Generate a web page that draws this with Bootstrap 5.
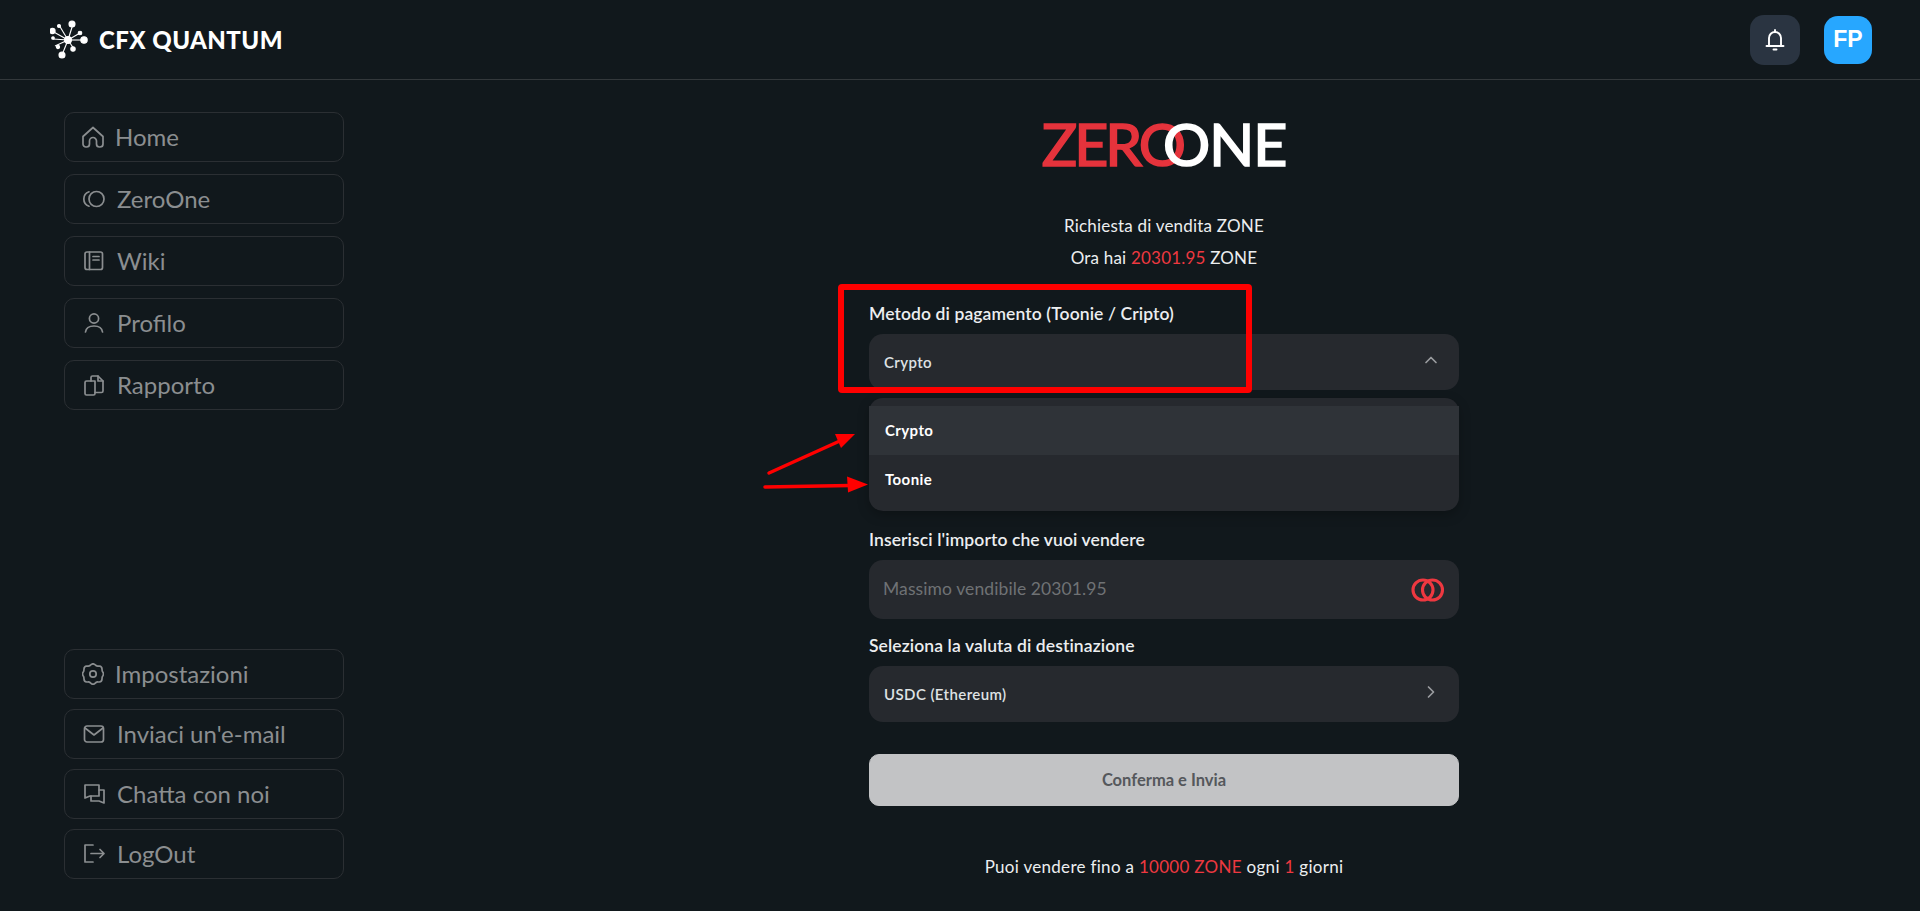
<!DOCTYPE html>
<html lang="en">
<head>
  <meta charset="UTF-8" />
  <meta name="viewport" content="width=device-width, initial-scale=1" />
  <title>CFX Quantum</title>
  <link href="https://cdn.jsdelivr.net/npm/bootstrap@5.3.0/dist/css/bootstrap.min.css" rel="stylesheet" />
  <style>
    body { background: #11181c; color: #eceef0; font-family: "Lato", "Noto Sans", sans-serif; height: 911px; overflow: hidden; }
    .top-bar { height: 80px; border-bottom: 1px solid #33383b; padding: 0 48px 0 50px; }
    .brand-name { font-family: "Lato", sans-serif; font-weight: 900; font-size: 24px; letter-spacing: .45px; color: #fff; margin-left: 9px; }
    .bell-btn { width: 50px; height: 50px; border-radius: 14px; background: #2a3441; border: 0; }
    .avatar-btn { width: 48px; height: 48px; border-radius: 14px; background: #27a7ff; color: #fff; font: 700 23px "Liberation Sans", sans-serif; border: 0; margin-left: 24px; }
    .page-body { height: 831px; }
    .side-col { width: 408px; padding: 32px 64px; flex-shrink: 0; }
    .side-top { gap: 12px; }
    .side-bottom { gap: 10px; }
    .side-link { height: 50px; padding-left: 17px; gap: 11px; border: 1px solid #2b2f33; border-radius: 10px; color: #8b8e90; font-size: 24px; text-decoration: none; }
    .side-link svg { fill: none; stroke: currentColor; stroke-width: 1.7; stroke-linecap: round; stroke-linejoin: round; flex-shrink: 0; }
    .form-col { width: 590px; padding-top: 42px; }
    .logo-row { height: 46px; margin-bottom: 42px; font-size: 59px; line-height: 44px; -webkit-text-stroke: 1.7px currentColor; }
    .logo-zero { color: #e5333c; letter-spacing: -3px; }
    .logo-one { color: #fff; margin-left: -20px; letter-spacing: -1px; }
    .intro-line { font-size: 17px; line-height: 32px; text-align: center; letter-spacing: .2px; color: #eceef0; }
    .accent { color: #ee3840; }
    .field-label { display: block; font-size: 17.5px; font-weight: 600; letter-spacing: .1px; line-height: 20px; margin: 0 0 10px; color: #eceef0; }
    .select-box { height: 56px; background: #26292e; border-radius: 14px; padding: 0 21px 0 15px; font-size: 15px; font-weight: 600; letter-spacing: .4px; color: #dfe2e4; }
    .select-box svg { fill: none; stroke: #9a9c9f; stroke-width: 1.7; stroke-linecap: round; stroke-linejoin: round; }
    .option-list.dropdown-menu { --bs-dropdown-bg: #26292e; --bs-dropdown-border-width: 0; --bs-dropdown-border-radius: 14px; --bs-dropdown-padding-y: 8px; --bs-dropdown-item-padding-x: 16px; --bs-dropdown-item-padding-y: 0; --bs-dropdown-spacer: 0; --bs-dropdown-link-color: #fff; --bs-dropdown-link-active-color: #fff; width: 100%; height: 113px; margin: 8px 0 19px; box-shadow: 0 4px 12px rgba(0,0,0,.25); }
    .option-list .dropdown-item { height: 49px; line-height: 49px; font-size: 15px; font-weight: 700; letter-spacing: .4px; }
    .option-list .dropdown-item.is-current { background: #2f3338; }
    .amount-box { height: 59px; background: #26292e; border-radius: 14px; padding: 0 14px; margin-bottom: 17px; }
    .amount-box .form-control { background: transparent; border: 0; padding: 0; box-shadow: none; color: #fff; font-size: 17.5px; letter-spacing: .1px; }
    .amount-box .form-control::placeholder { color: #6f7275; opacity: 1; }
    .send-btn { --bs-btn-disabled-bg: #c2c3c5; --bs-btn-disabled-color: #55585c; --bs-btn-disabled-border-color: #c2c3c5; --bs-btn-disabled-opacity: 1; height: 52px; border-radius: 10px; font-size: 16.5px; font-weight: 700; margin-top: 32px; }
    .limit-note { font-size: 17px; letter-spacing: .3px; text-align: center; margin-top: 48px; color: #eceef0; }
    .annot { position: absolute; top: 0; left: 0; pointer-events: none; }
  </style>
</head>
<body>

<!-- Header -->
<header class="top-bar d-flex align-items-center">
  <svg width="40" height="40" viewBox="0 0 40 40" class="flex-shrink-0">
    <g stroke="#fff" stroke-width="1.1" fill="#fff">
      <line x1="18" y1="20" x2="23" y2="4"/><line x1="18" y1="20" x2="9" y2="5"/><line x1="18" y1="20" x2="2" y2="11"/>
      <line x1="18" y1="20" x2="5" y2="26"/><line x1="18" y1="20" x2="12" y2="35"/><line x1="18" y1="20" x2="24" y2="29"/>
      <line x1="18" y1="20" x2="35" y2="20"/><line x1="18" y1="20" x2="30" y2="13"/><line x1="18" y1="20" x2="3" y2="19"/>
      <circle cx="18" cy="20" r="3.4"/><circle cx="22" cy="4" r="3"/><circle cx="9" cy="6" r="1.5"/>
      <circle cx="2.5" cy="11" r="2.6"/><circle cx="3" cy="18" r="1.3"/><circle cx="8" cy="27" r="1.6"/>
      <circle cx="12" cy="35" r="3"/><circle cx="23" cy="29" r="2.2"/><circle cx="34" cy="20" r="3.2"/><circle cx="30" cy="13" r="1.8"/>
    </g>
  </svg>
  <span class="brand-name">CFX QUANTUM</span>
  <div class="ms-auto d-flex align-items-center">
    <button class="bell-btn d-flex align-items-center justify-content-center" type="button" aria-label="Notifiche">
      <svg width="20" height="24" viewBox="0 0 20 24" fill="none" stroke="#fff" stroke-width="1.9" stroke-linecap="round" stroke-linejoin="round">
        <path d="M4 17.500V10a6 6 0 0 1 12 0v7.500"/><path d="M1.500 18h17"/><path d="M8.500 21.500h3"/><path d="M10 2v2"/>
      </svg>
    </button>
    <button class="avatar-btn" type="button">FP</button>
  </div>
</header>

<div class="page-body d-flex">

  <!-- Sidebar -->
  <aside class="side-col d-flex flex-column justify-content-between">
    <nav class="side-top d-flex flex-column">
      <a href="#" class="side-link d-flex align-items-center">
        <svg width="22" height="22" viewBox="0 0 22 22"><path d="M1 10.500 11 1.500l10 9v7.500a3 3 0 0 1-3 3h-.5a3 3 0 0 1-3-3v-3a3.500 3.500 0 0 0-7 0v3a3 3 0 0 1-3 3H4a3 3 0 0 1-3-3z"/></svg>
        Home
      </a>
      <a href="#" class="side-link d-flex align-items-center">
        <svg width="24" height="22" viewBox="0 0 24 22"><circle cx="14.500" cy="11" r="7.500"/><path d="M7 3.800A7.600 7.600 0 0 0 7 18.200"/></svg>
        ZeroOne
      </a>
      <a href="#" class="side-link d-flex align-items-center">
        <svg width="24" height="22" viewBox="0 0 24 22"><rect x="3" y="2" width="17.500" height="17.500" rx="2"/><path d="M7.500 2v17.500"/><path d="M11 6.500h6M11 10h6"/></svg>
        Wiki
      </a>
      <a href="#" class="side-link d-flex align-items-center">
        <svg width="24" height="22" viewBox="0 0 24 22"><circle cx="12" cy="6.500" r="4.600"/><path d="M3.500 20c.5-4 4-6 8.500-6s8 2 8.500 6"/></svg>
        Profilo
      </a>
      <a href="#" class="side-link d-flex align-items-center">
        <svg width="24" height="22" viewBox="0 0 24 22"><path d="M3 8.500A1.500 1.500 0 0 1 4.500 7H13v12.500a1.500 1.500 0 0 1-1.500 1.500h-7A1.500 1.500 0 0 1 3 19.500z"/><path d="M9 7V3.500A1.500 1.500 0 0 1 10.500 2H16l5 5v10a1.500 1.500 0 0 1-1.500 1.500H13"/><path d="M16 2v5h5"/></svg>
        Rapporto
      </a>
    </nav>
    <nav class="side-bottom d-flex flex-column">
      <a href="#" class="side-link d-flex align-items-center">
        <svg width="22" height="22" viewBox="0 0 22 22"><path d="M9 1.700a3 3 0 0 1 4 0l1 .8c.6.5 1.200.7 2 .6l1.300-.1a3 3 0 0 1 2.700 3l.1 1.300c0 .8.3 1.400.8 2a3 3 0 0 1 0 3.400c-.5.6-.8 1.200-.8 2l-.1 1.300a3 3 0 0 1-2.700 3l-1.300-.1c-.8-.1-1.400.1-2 .6l-1 .8a3 3 0 0 1-4 0l-1-.8c-.6-.5-1.200-.7-2-.6l-1.300.1a3 3 0 0 1-2.700-3l-.1-1.300c0-.8-.3-1.400-.8-2a3 3 0 0 1 0-3.400c.5-.6.8-1.200.8-2l.1-1.300a3 3 0 0 1 2.700-3l1.300.1c.8.1 1.400-.1 2-.6z"/><circle cx="11" cy="11" r="3.200"/></svg>
        Impostazioni
      </a>
      <a href="#" class="side-link d-flex align-items-center">
        <svg width="24" height="22" viewBox="0 0 24 22"><rect x="2.500" y="3" width="19" height="16" rx="2.500"/><path d="m3 5 9 7 9-7"/></svg>
        Inviaci un'e-mail
      </a>
      <a href="#" class="side-link d-flex align-items-center">
        <svg width="24" height="22" viewBox="0 0 24 22"><path d="M3 2h14v11H8l-5 2z"/><path d="M17 7h5v13l-5-2H9v-5"/></svg>
        Chatta con noi
      </a>
      <a href="#" class="side-link d-flex align-items-center">
        <svg width="24" height="22" viewBox="0 0 24 22"><path d="M11 2H3v17h8"/><path d="M9 10.500h13M18 6.500l4 4-4 4"/></svg>
        LogOut
      </a>
    </nav>
  </aside>

  <!-- Sell form -->
  <div class="flex-grow-1 d-flex justify-content-center">
    <main class="form-col">
      <div class="logo-row d-flex justify-content-center">
        <span class="logo-zero">ZERO</span><span class="logo-one">ONE</span>
      </div>
      <p class="intro-line mb-0">Richiesta di vendita ZONE</p>
      <p class="intro-line mb-0">Ora hai <span class="accent">20301.95</span> ZONE</p>

      <form style="margin-top:30px">
        <label class="field-label">Metodo di pagamento (Toonie / Cripto)</label>
        <div class="select-box d-flex align-items-center justify-content-between">
          <span>Crypto</span>
          <svg width="14" height="14" viewBox="0 0 14 14" class="mb-1"><path d="m2 9.500 5-5 5 5"/></svg>
        </div>
        <div class="option-list dropdown-menu show position-static">
          <a class="dropdown-item is-current" href="#">Crypto</a>
          <a class="dropdown-item" href="#">Toonie</a>
        </div>

        <label class="field-label">Inserisci l'importo che vuoi vendere</label>
        <div class="amount-box d-flex align-items-center">
          <input class="form-control" type="text" placeholder="Massimo vendibile 20301.95" />
          <svg width="34" height="26" viewBox="0 0 34 26" fill="none" stroke="#ee3840" stroke-width="3.100" class="flex-shrink-0">
            <circle cx="12" cy="13" r="10"/><circle cx="21.500" cy="13" r="10"/>
          </svg>
        </div>

        <label class="field-label">Seleziona la valuta di destinazione</label>
        <div class="select-box d-flex align-items-center justify-content-between">
          <span>USDC (Ethereum)</span>
          <svg width="14" height="14" viewBox="0 0 14 14" class="mb-1"><path d="m4.500 2 5 5-5 5"/></svg>
        </div>

        <button class="btn send-btn w-100" type="button" disabled>Conferma e Invia</button>
      </form>

      <p class="limit-note">Puoi vendere fino a <span class="accent">10000 ZONE</span> ogni <span class="accent">1</span> giorni</p>
    </main>
  </div>
</div>

<!-- Screenshot annotations -->
<svg class="annot" width="1920" height="911" viewBox="0 0 1920 911">
  <rect x="841" y="287" width="408" height="103" rx="1" fill="none" stroke="#ff0000" stroke-width="6"/>
  <path d="M769 473 842 440" stroke="#ff0000" stroke-width="3.500" stroke-linecap="round"/>
  <path d="M855 434 835 434 841 448z" fill="#ff0000"/>
  <path d="M765 487 850 485.500" stroke="#ff0000" stroke-width="3.500" stroke-linecap="round"/>
  <path d="M868 484.500 847 476.500 848 492.500z" fill="#ff0000"/>
</svg>

<script src="https://cdn.jsdelivr.net/npm/bootstrap@5.3.0/dist/js/bootstrap.bundle.min.js"></script>
</body>
</html>
